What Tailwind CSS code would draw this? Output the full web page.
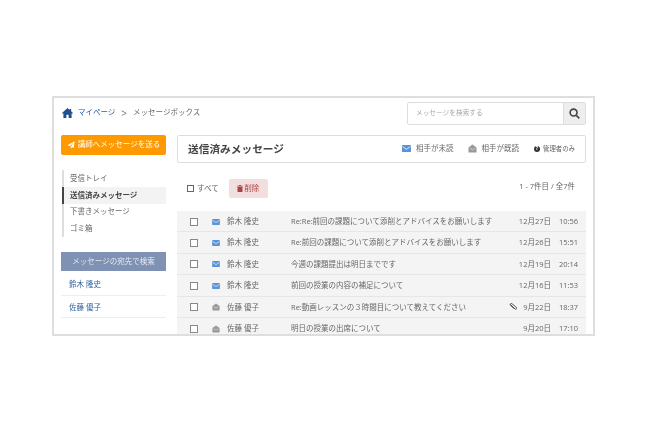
<!DOCTYPE html>
<html lang="ja">
<head>
<meta charset="UTF-8">
<title>送信済みメッセージ</title>
<script src="https://cdn.jsdelivr.net/npm/@tailwindcss/browser@4"></script>
</head>
<body class="bg-white text-[#666] font-['Open_Sans','Noto_Sans_CJK_JP',sans-serif] text-[7.5px] whitespace-nowrap pt-[96px] pl-[52px]">
  <div class="w-[543px] h-[240px] border-2 border-[#dedede] overflow-hidden pt-[3px] pl-[7px] pr-[7px] blur-[0.3px]">

    <!-- breadcrumb + search -->
    <div class="flex items-center justify-between h-[24px]">
      <div class="flex items-center">
        <svg class="w-[11px] h-[10px] ml-[1px]" viewBox="0 0 24 22" fill="#1d4f91"><path d="M12 0 0 11l1.500 1.700L3 11.400V22h6.500v-7h5v7H21V11.400l1.500 1.300L24 11l-4-3.600V2h-3.500v2.200z"/></svg>
        <span class="ml-[5px] text-[#2f5f9e]">マイページ</span>
        <span class="mx-[6px] text-[10px] text-[#777]">&gt;</span>
        <span>メッセージボックス</span>
      </div>
      <div class="flex h-[23px] w-[179px] border border-[#ddd] rounded-[2px]">
        <div class="flex-1 flex items-center pl-[8px] text-[#aaa] text-[6.7px]">メッセージを検索する</div>
        <div class="w-[22px] bg-[#eee] border-l border-[#ddd] flex items-center justify-center">
          <svg class="w-[11px] h-[11px]" viewBox="0 0 24 24" fill="none" stroke="#444" stroke-width="3.500"><circle cx="10" cy="10" r="7.500"/><path d="m16 16 6.500 6.500"/></svg>
        </div>
      </div>
    </div>

    <div class="flex gap-[11px] mt-[10px]">
      <!-- left column -->
      <div class="w-[105px] shrink-0">
        <div class="h-[20px] bg-[#f90] rounded-[2px] text-white flex items-center justify-center gap-[3px]">
          <svg class="w-[8px] h-[8px]" viewBox="0 0 24 24" fill="#fff"><path d="M23 1 1 13l7 3 11-10-8 12v5l4-4 5 2z"/></svg>
          講師へメッセージを送る
        </div>
        <ul class="mt-[15px] ml-[1px] border-l-2 border-[#ddd]">
          <li class="h-[17px] flex items-center pl-[6px]">受信トレイ</li>
          <li class="h-[17px] flex items-center pl-[6px] bg-[#f3f3f3] font-bold text-[#444] -ml-[2px] border-l-2 border-[#444]">送信済みメッセージ</li>
          <li class="h-[16px] flex items-center pl-[6px]">下書きメッセージ</li>
          <li class="h-[17px] flex items-center pl-[6px]">ゴミ箱</li>
        </ul>
        <div class="mt-[15px] h-[19px] bg-[#7f92b3] text-[#e4e8f0] flex items-center justify-center">メッセージの宛先で検索</div>
        <div class="h-[25px] flex items-center pl-[8px] pt-[4px] text-[#2f5f9e] border-b border-[#eee]">鈴木 隆史</div>
        <div class="h-[22px] flex items-center pl-[8px] pt-[2px] text-[#2f5f9e] border-b border-[#eee]">佐藤 優子</div>
      </div>

      <!-- main column -->
      <div class="flex-1 min-w-0">
        <div class="h-[28px] border border-[#ddd] rounded-[2px] flex items-center pl-[10px] pr-[10px]">
          <h1 class="text-[10.7px] font-bold text-[#444]">送信済みメッセージ</h1>
          <div class="ml-auto flex items-center">
            <svg class="w-[9px] h-[7px] mr-[5px] mb-[1px]" viewBox="0 0 18 14"><rect width="18" height="14" rx="1" fill="#5b94d6"/><path d="m1 3 8 5.500L17 3" fill="none" stroke="#fff" stroke-width="1.500"/></svg>
            <span>相手が未読</span>
            <svg class="w-[9px] h-[9px] ml-[14px] mr-[5px] mb-[1px]" viewBox="0 0 18 18" fill="#999"><path d="M9 1 1 7v10h16V7z"/><path d="m4 8 5 4 5-4" fill="none" stroke="#eee" stroke-width="1.300"/></svg>
            <span>相手が既読</span>
            <span class="ml-[15px] mr-[3px] w-[6px] h-[6px] rounded-full bg-[#333] text-white text-[5px] font-bold flex items-center justify-center">?</span>
            <span class="text-[6.4px]">管理者のみ</span>
          </div>
        </div>

        <div class="flex items-center mt-[16px] h-[19px] pl-[10px] pr-[11px]">
          <span class="w-[7px] h-[7px] border border-[#666] mr-[3px]"></span>
          <span>すべて</span>
          <div class="ml-[10px] w-[39px] h-[19px] bg-[#f2dede] rounded-[2px] flex items-center justify-center text-[#a94442]">
            <svg class="w-[6px] h-[7px] mr-[1px]" viewBox="0 0 12 14" fill="#a94442"><path d="M4 0h4v1.500h4V3H0V1.500h4zM1 4h10v10H1z"/></svg>
            削除
          </div>
          <span class="ml-auto mb-[3px]">1 - 7件目 / 全7件</span>
        </div>

        <!-- message rows -->
        <div class="mt-[13px] bg-[#f4f4f4]">
          <div class="flex items-center h-[21.400px] pt-[1px] border-b border-[#e6e6e6] pl-[13px] pr-[8px]">
            <span class="w-[8px] h-[8px] border border-[#888] bg-white"></span>
            <svg class="w-[8px] h-[6px] ml-[14px]" viewBox="0 0 18 14"><rect width="18" height="14" rx="1" fill="#5b94d6"/><path d="m1 3 8 5.500L17 3" fill="none" stroke="#fff" stroke-width="1.500"/></svg>
            <span class="ml-[7px] w-[64px]">鈴木 隆史</span>
            <span class="flex-1">Re:Re:前回の課題について添削とアドバイスをお願いします</span>
            <span class="w-[38px] text-right">12月27日</span>
            <span class="ml-[8px] w-[19px]">10:56</span>
          </div>
          <div class="flex items-center h-[21.400px] pt-[1px] border-b border-[#e6e6e6] pl-[13px] pr-[8px]">
            <span class="w-[8px] h-[8px] border border-[#888] bg-white"></span>
            <svg class="w-[8px] h-[6px] ml-[14px]" viewBox="0 0 18 14"><rect width="18" height="14" rx="1" fill="#5b94d6"/><path d="m1 3 8 5.500L17 3" fill="none" stroke="#fff" stroke-width="1.500"/></svg>
            <span class="ml-[7px] w-[64px]">鈴木 隆史</span>
            <span class="flex-1">Re:前回の課題について添削とアドバイスをお願いします</span>
            <span class="w-[38px] text-right">12月26日</span>
            <span class="ml-[8px] w-[19px]">15:51</span>
          </div>
          <div class="flex items-center h-[21.400px] pt-[1px] border-b border-[#e6e6e6] pl-[13px] pr-[8px]">
            <span class="w-[8px] h-[8px] border border-[#888] bg-white"></span>
            <svg class="w-[8px] h-[6px] ml-[14px]" viewBox="0 0 18 14"><rect width="18" height="14" rx="1" fill="#5b94d6"/><path d="m1 3 8 5.500L17 3" fill="none" stroke="#fff" stroke-width="1.500"/></svg>
            <span class="ml-[7px] w-[64px]">鈴木 隆史</span>
            <span class="flex-1">今週の課題提出は明日までです</span>
            <span class="w-[38px] text-right">12月19日</span>
            <span class="ml-[8px] w-[19px]">20:14</span>
          </div>
          <div class="flex items-center h-[21.400px] pt-[1px] border-b border-[#e6e6e6] pl-[13px] pr-[8px]">
            <span class="w-[8px] h-[8px] border border-[#888] bg-white"></span>
            <svg class="w-[8px] h-[6px] ml-[14px]" viewBox="0 0 18 14"><rect width="18" height="14" rx="1" fill="#5b94d6"/><path d="m1 3 8 5.500L17 3" fill="none" stroke="#fff" stroke-width="1.500"/></svg>
            <span class="ml-[7px] w-[64px]">鈴木 隆史</span>
            <span class="flex-1">前回の授業の内容の補足について</span>
            <span class="w-[38px] text-right">12月16日</span>
            <span class="ml-[8px] w-[19px]">11:53</span>
          </div>
          <div class="flex items-center h-[21.400px] pt-[1px] border-b border-[#e6e6e6] pl-[13px] pr-[8px]">
            <span class="w-[8px] h-[8px] border border-[#888] bg-white"></span>
            <svg class="w-[8px] h-[8px] ml-[14px]" viewBox="0 0 18 18" fill="#999"><path d="M9 1 1 7v10h16V7z"/><path d="m4 8 5 4 5-4" fill="none" stroke="#eee" stroke-width="1.300"/></svg>
            <span class="ml-[7px] w-[64px]">佐藤 優子</span>
            <span class="flex-1">Re:動画レッスンの３時間目について教えてください</span>
            <svg class="w-[8px] h-[8px]" viewBox="0 0 16 16" fill="none" stroke="#555" stroke-width="2"><path d="M3 3 12 12a2 2 0 0 0 3-3L6 1.500a2 2 0 0 0-3 3l7 7"/></svg>
            <span class="w-[34px] text-right">9月22日</span>
            <span class="ml-[8px] w-[19px]">18:37</span>
          </div>
          <div class="flex items-center h-[21.400px] pt-[1px] border-b border-[#e6e6e6] pl-[13px] pr-[8px]">
            <span class="w-[8px] h-[8px] border border-[#888] bg-white"></span>
            <svg class="w-[8px] h-[8px] ml-[14px]" viewBox="0 0 18 18" fill="#999"><path d="M9 1 1 7v10h16V7z"/><path d="m4 8 5 4 5-4" fill="none" stroke="#eee" stroke-width="1.300"/></svg>
            <span class="ml-[7px] w-[64px]">佐藤 優子</span>
            <span class="flex-1">明日の授業の出席について</span>
            <span class="w-[38px] text-right">9月20日</span>
            <span class="ml-[8px] w-[19px]">17:10</span>
          </div>
        </div>
      </div>
    </div>
  </div>
</body>
</html>
